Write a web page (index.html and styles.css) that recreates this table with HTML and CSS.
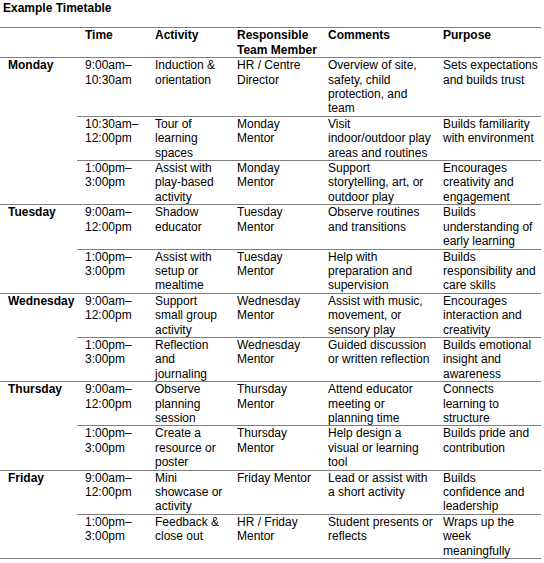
FILE: index.html
```html
<!DOCTYPE html>
<html>
<head>
<meta charset="utf-8">
<link rel="stylesheet" href="styles.css">
</head>
<body>
<h1 class="title">Example Timetable</h1>
<table class="tt">
  <colgroup>
    <col class="c-day"><col class="c-time"><col class="c-act"><col class="c-resp"><col class="c-com"><col class="c-pur">
  </colgroup>
  <thead>
    <tr><th></th><th>Time</th><th>Activity</th><th>Responsible<br>Team Member</th><th>Comments</th><th>Purpose</th></tr>
  </thead>
  <tbody>
    <tr class="day">
      <td class="dayname" rowspan="3">Monday</td>
      <td>9:00am–<br>10:30am</td>
      <td>Induction &amp;<br>orientation</td>
      <td>HR / Centre<br>Director</td>
      <td>Overview of site,<br>safety, child<br>protection, and<br>team</td>
      <td>Sets expectations<br>and builds trust</td>
    </tr>
    <tr>
      <td>10:30am–<br>12:00pm</td>
      <td>Tour of<br>learning<br>spaces</td>
      <td>Monday<br>Mentor</td>
      <td>Visit<br>indoor/outdoor play<br>areas and routines</td>
      <td>Builds familiarity<br>with environment</td>
    </tr>
    <tr>
      <td>1:00pm–<br>3:00pm</td>
      <td>Assist with<br>play-based<br>activity</td>
      <td>Monday<br>Mentor</td>
      <td>Support<br>storytelling, art, or<br>outdoor play</td>
      <td>Encourages<br>creativity and<br>engagement</td>
    </tr>
    <tr class="day">
      <td class="dayname" rowspan="2">Tuesday</td>
      <td>9:00am–<br>12:00pm</td>
      <td>Shadow<br>educator</td>
      <td>Tuesday<br>Mentor</td>
      <td>Observe routines<br>and transitions</td>
      <td>Builds<br>understanding of<br>early learning</td>
    </tr>
    <tr>
      <td>1:00pm–<br>3:00pm</td>
      <td>Assist with<br>setup or<br>mealtime</td>
      <td>Tuesday<br>Mentor</td>
      <td>Help with<br>preparation and<br>supervision</td>
      <td>Builds<br>responsibility and<br>care skills</td>
    </tr>
    <tr class="day">
      <td class="dayname" rowspan="2">Wednesday</td>
      <td>9:00am–<br>12:00pm</td>
      <td>Support<br>small group<br>activity</td>
      <td>Wednesday<br>Mentor</td>
      <td>Assist with music,<br>movement, or<br>sensory play</td>
      <td>Encourages<br>interaction and<br>creativity</td>
    </tr>
    <tr>
      <td>1:00pm–<br>3:00pm</td>
      <td>Reflection<br>and<br>journaling</td>
      <td>Wednesday<br>Mentor</td>
      <td>Guided discussion<br>or written reflection</td>
      <td>Builds emotional<br>insight and<br>awareness</td>
    </tr>
    <tr class="day">
      <td class="dayname" rowspan="2">Thursday</td>
      <td>9:00am–<br>12:00pm</td>
      <td>Observe<br>planning<br>session</td>
      <td>Thursday<br>Mentor</td>
      <td>Attend educator<br>meeting or<br>planning time</td>
      <td>Connects<br>learning to<br>structure</td>
    </tr>
    <tr>
      <td>1:00pm–<br>3:00pm</td>
      <td>Create a<br>resource or<br>poster</td>
      <td>Thursday<br>Mentor</td>
      <td>Help design a<br>visual or learning<br>tool</td>
      <td>Builds pride and<br>contribution</td>
    </tr>
    <tr class="day">
      <td class="dayname" rowspan="2">Friday</td>
      <td>9:00am–<br>12:00pm</td>
      <td>Mini<br>showcase or<br>activity</td>
      <td>Friday Mentor</td>
      <td>Lead or assist with<br>a short activity</td>
      <td>Builds<br>confidence and<br>leadership</td>
    </tr>
    <tr>
      <td>1:00pm–<br>3:00pm</td>
      <td>Feedback &amp;<br>close out</td>
      <td>HR / Friday<br>Mentor</td>
      <td>Student presents or<br>reflects</td>
      <td>Wraps up the<br>week<br>meaningfully</td>
    </tr>
  </tbody>
</table>
</body>
</html>
```

FILE: styles.css
```css
html, body {
  margin: 0;
  padding: 0;
  background: #ffffff;
}
body {
  font-family: "Liberation Sans", Arial, sans-serif;
  font-size: 12px;
  line-height: 14.4px;
  color: #000000;
}
.title {
  margin: 1px 0 0 3px;
  font-size: 12px;
  line-height: 14.4px;
  font-weight: bold;
}
.tt {
  margin-top: 12px;
  width: 541px;
  table-layout: fixed;
  border-collapse: collapse;
  border-top: 1px solid #7f7f7f;
  border-bottom: 1px solid #7f7f7f;
}
.c-day { width: 77px; }
.c-time { width: 70px; }
.c-act { width: 82px; }
.c-resp { width: 91px; }
.c-com { width: 115px; }
.c-pur { width: 106px; }
.tt th, .tt td {
  padding: 0 4px 0 8px;
  text-align: left;
  vertical-align: top;
  white-space: nowrap;
  border-top: 1px solid #7f7f7f;
}
.tt th {
  font-weight: bold;
}
.tt .dayname {
  font-weight: bold;
}
```
